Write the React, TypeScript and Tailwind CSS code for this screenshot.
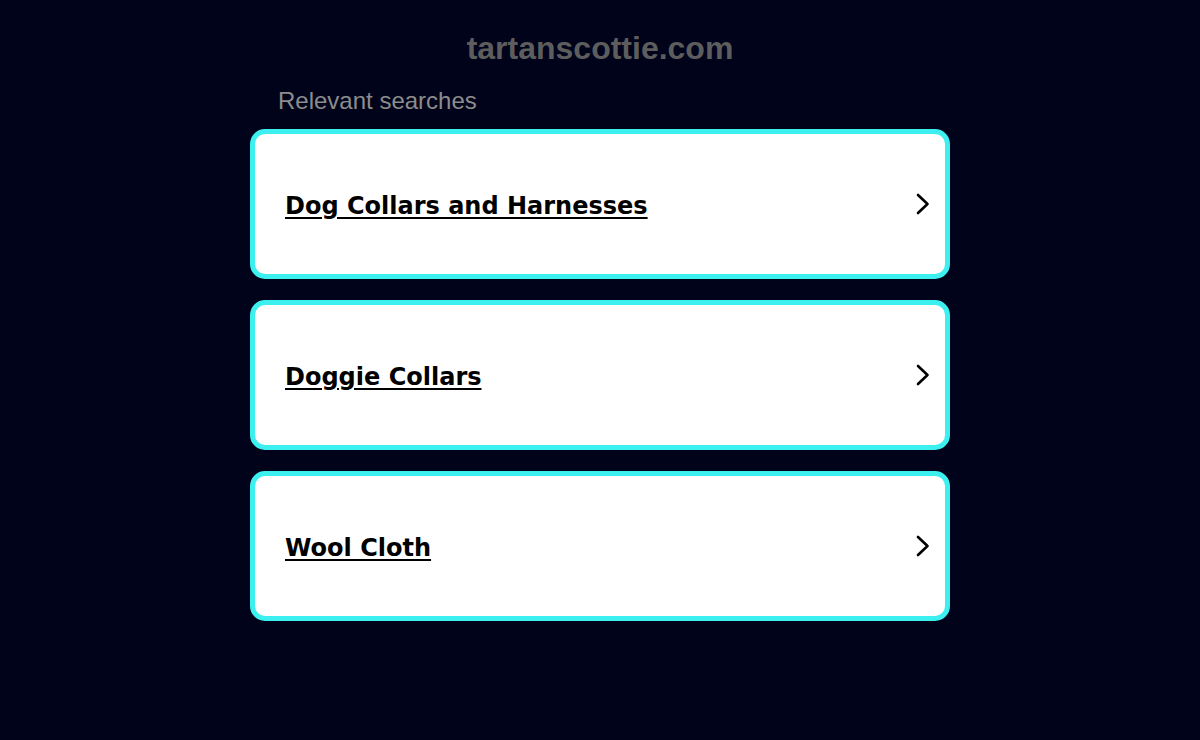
const searches = ['Dog Collars and Harnesses', 'Doggie Collars', 'Wool Cloth']

function Chevron() {
  return (
    <svg width="14" height="22" viewBox="0 0 14 22" fill="none" stroke="black" strokeWidth="2.6" strokeLinecap="round" strokeLinejoin="round">
      <polyline points="2,2 11.5,11 2,20" />
    </svg>
  )
}

export default function App() {
  return (
    <div className="min-h-[740px] bg-[#00031a] flex flex-col items-center" style={{ fontFamily: '"Liberation Sans", Arial, sans-serif' }}>
      <h1 className="mt-[30px] text-[32px] leading-[36px] font-bold text-[#5d5d5d]">tartanscottie.com</h1>
      <div className="w-[700px] mt-[21px]">
        <div className="pl-[28px] text-[24px] leading-[28px] text-[#8c8c8c]">Relevant searches</div>
        <ul className="mt-[14px] flex flex-col gap-[21px]">
          {searches.map(s => (
            <li key={s} className="h-[150px] rounded-[15px] border-[5px] border-[#3cf0f0] bg-white flex items-center justify-between pl-[30px] pr-[15px]">
              <a href="#" className="mt-[4px] text-[24px] font-bold text-black underline underline-offset-[3px] decoration-2" style={{ fontFamily: '"DejaVu Sans", Verdana, sans-serif' }}>{s}</a>
              <Chevron />
            </li>
          ))}
        </ul>
      </div>
    </div>
  )
}
